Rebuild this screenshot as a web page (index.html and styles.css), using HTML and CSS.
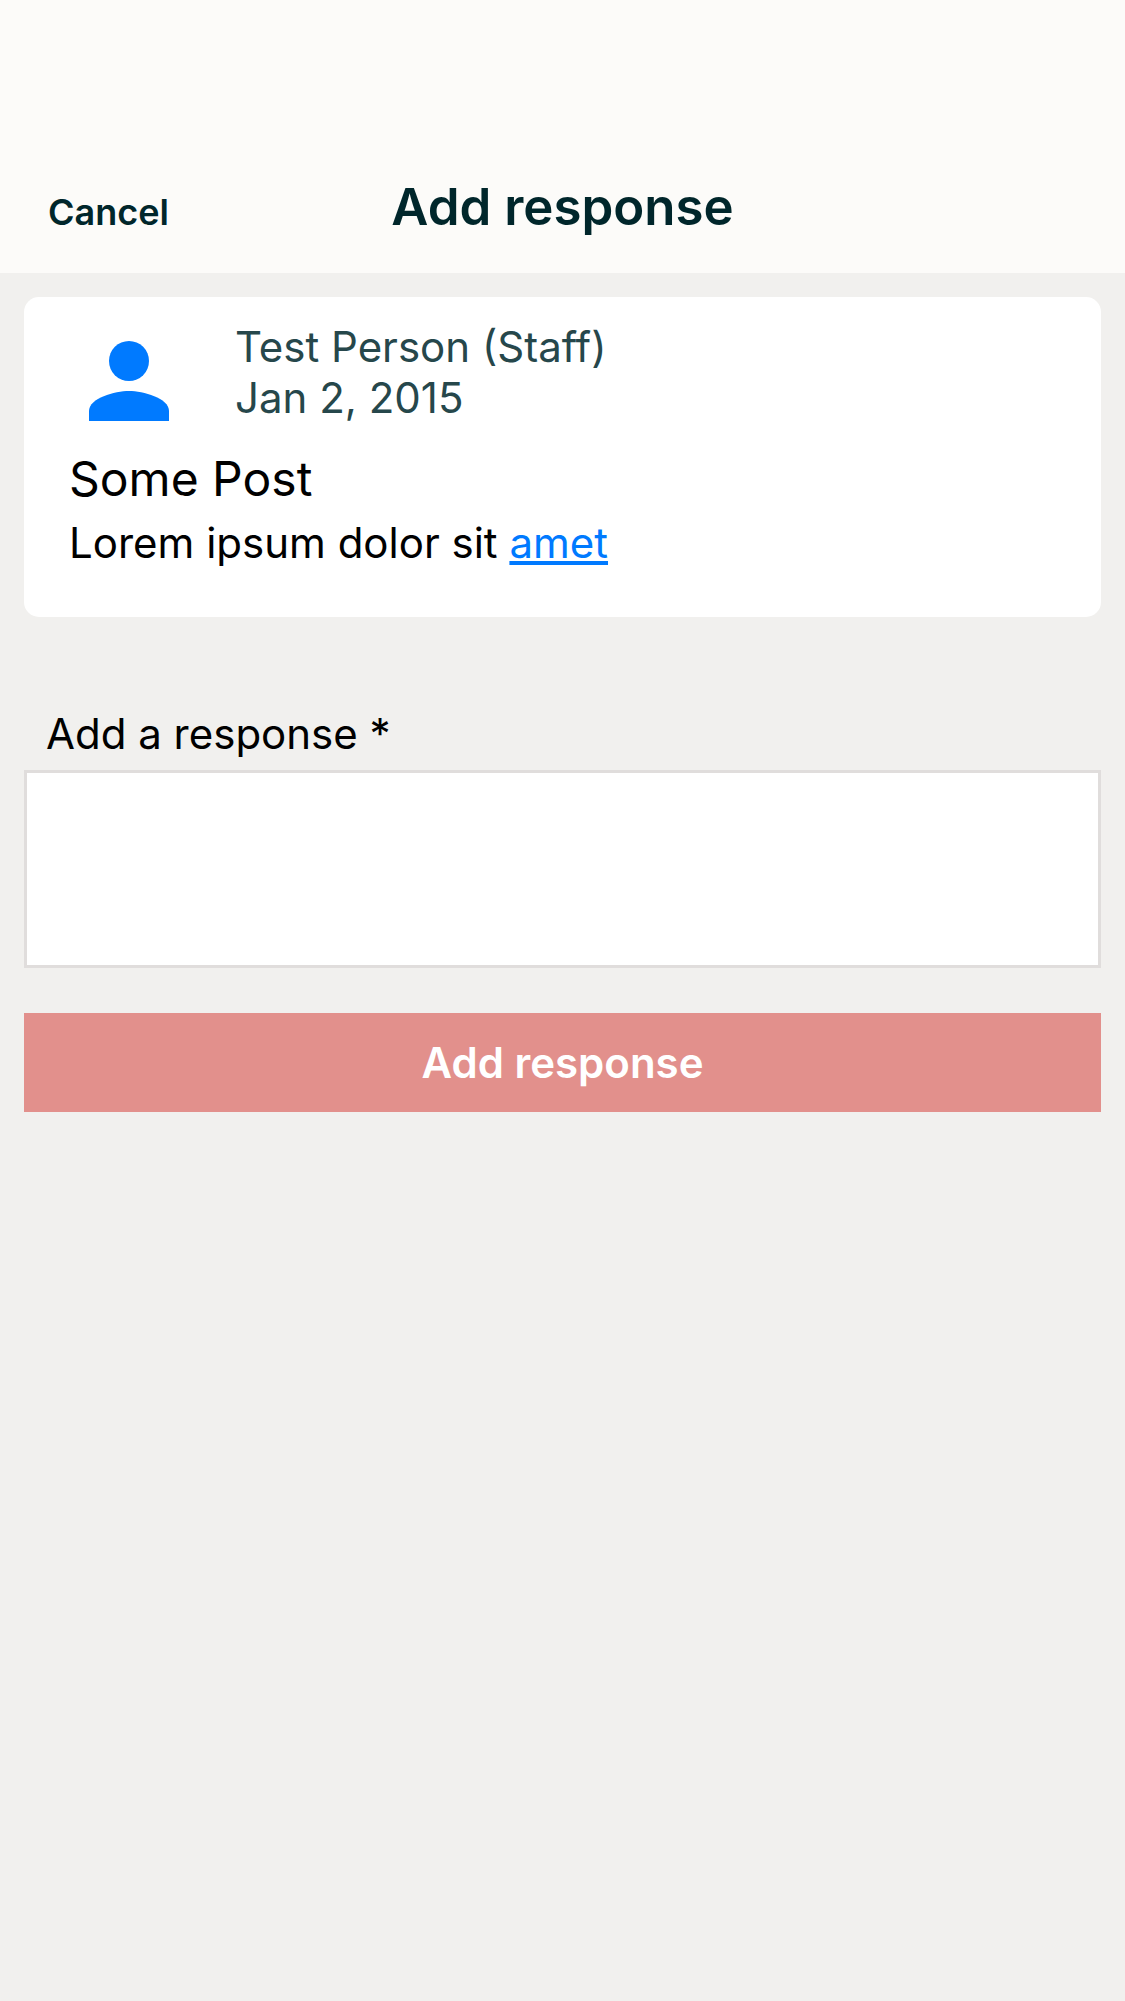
FILE: index.html
```html
<!DOCTYPE html>
<html lang="en">
<head>
<meta charset="utf-8">
<title>Add response</title>
<link rel="stylesheet" href="styles.css">
</head>
<body>
<header class="navbar">
  <button class="cancel">Cancel</button>
  <h1 class="title">Add response</h1>
</header>
<main class="content">
  <article class="post">
    <div class="author">
      <svg class="avatar" viewBox="0 0 80 80" aria-hidden="true"><circle cx="40" cy="20" r="20"/><path d="M0 80V70C0 57 26 50 40 50S80 57 80 70V80Z"/></svg>
      <div class="meta"><div>Test Person (Staff)</div><div>Jan 2, 2015</div></div>
    </div>
    <h2 class="subject">Some Post</h2>
    <p class="text">Lorem ipsum dolor sit <a class="link" href="#">amet</a></p>
  </article>
  <form class="reply">
    <label class="label" for="response">Add a response *</label>
    <textarea class="field" id="response"></textarea>
    <button class="submit" type="button">Add response</button>
  </form>
</main>
</body>
</html>
```
FILE: styles.css
```css
* { box-sizing: border-box; }
body { margin: 0; min-height: 2001px; background: #f1f0ee; color: #000; font-family: Inter, sans-serif; }
.navbar { height: 273px; padding: 141px 24px 0; background: #fcfbf9; display: grid; grid-template-columns: 1fr auto 1fr; align-items: center; color: #00262b; }
.cancel { border: 0; background: none; padding: 9px 24px 0; justify-self: start; font: 600 36px/44px Inter, sans-serif; color: inherit; }
.title { margin: 0; font-size: 51px; font-weight: 600; line-height: 62px; }
.content { padding: 24px; }
.post { height: 320px; padding: 24px 45px; border-radius: 15px; background: #fff; }
.author { display: flex; gap: 66px; padding-left: 20px; }
.avatar { width: 80px; height: 80px; margin-top: 20px; fill: #007aff; }
.meta { font-size: 42px; line-height: 51px; color: #26474b; }
.subject { margin: 27px 0 0; font-size: 48px; line-height: 58px; font-weight: 400; }
.text { margin: 9px 0 0; font-size: 42px; line-height: 51px; }
.link { color: #007aff; }
.reply { display: flex; flex-direction: column; padding-top: 91px; }
.label { padding-left: 22px; font-size: 42px; line-height: 51px; }
.field { height: 198px; margin: 11px 0 45px; border: 3px solid #e0dddc; border-radius: 0; background: #fff; resize: none; }
.submit { height: 99px; border: 0; background: #e2908c; color: #fff; font: 600 42px/51px Inter, sans-serif; }
```
